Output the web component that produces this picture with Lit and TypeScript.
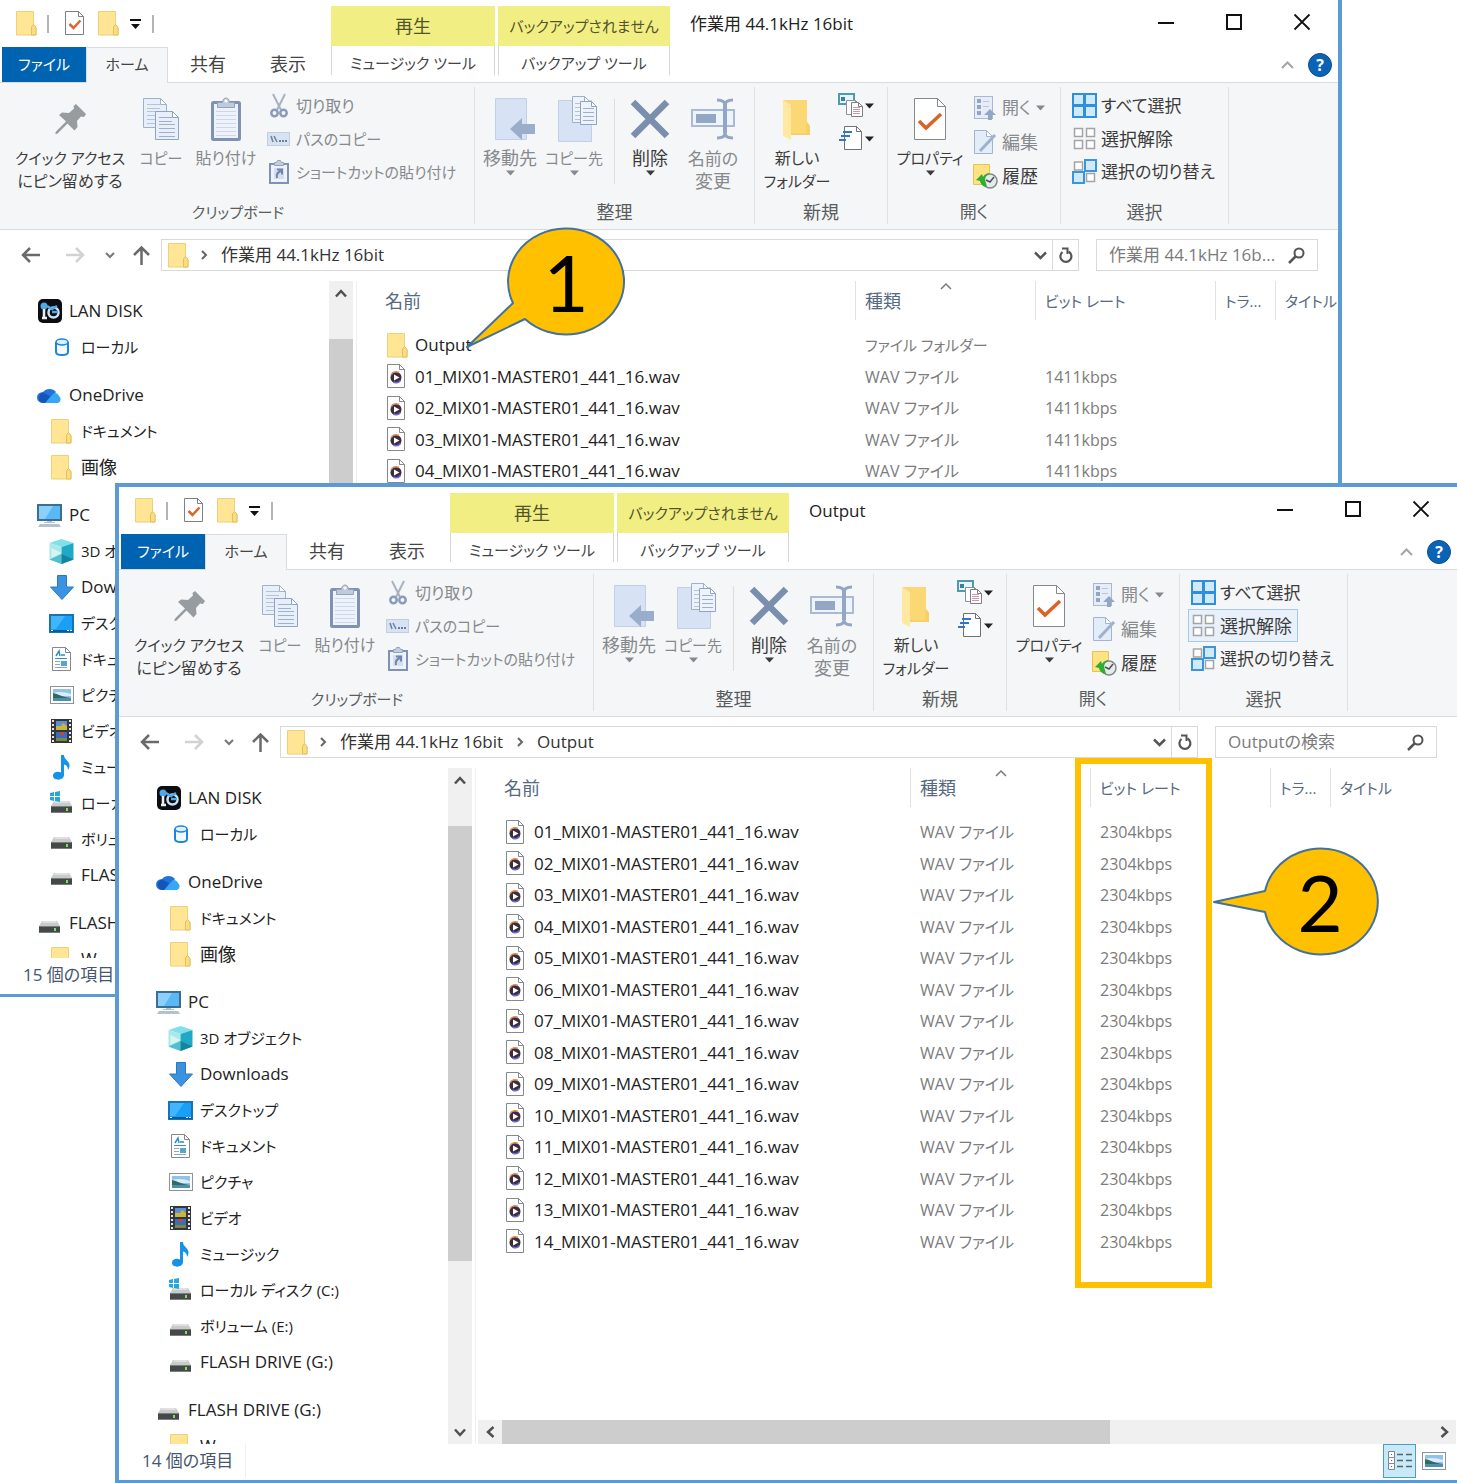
import { LitElement, html, svg, css, nothing, TemplateResult } from "lit";
import { customElement, property } from "lit/decorators.js";

const icon = (w: number, h: number, body: TemplateResult) =>
  html`<svg class="ic" width=${w} height=${h} viewBox="0 0 ${w} ${h}" fill="none" aria-hidden="true">${body}</svg>`;

const lines = (x: number, y: number, w: number, n: number, step: number, color: string) =>
  svg`<path stroke=${color} d=${Array.from({ length: n }, (_, i) => `M${x} ${y + i * step + 0.5}h${w}`).join("")}></path>`;

const page = (x: number, y: number, w: number, h: number, fold: number, fill: string, stroke: string) =>
  svg`<path fill=${fill} stroke=${stroke} d="M${x + 0.5} ${y + 0.5}h${w - fold - 1}l${fold} ${fold}v${h - fold - 1}h${-(w - 1)}z"></path>
      <path fill="#fff" stroke=${stroke} d="M${x + w - fold - 0.5} ${y + 0.5}v${fold}h${fold}z"></path>`;

const driveShape = svg`
  <path fill="#c9cbcb" d="M3 10h15l3 5H0z"></path>
  <path fill="#dfe0e0" d="M4 10h13l1 2H3z"></path>
  <rect y="15" width="21" height="7" rx="1" fill="#454848"></rect>
  <path stroke="#7b7e7e" d="M1 15.5h19M1 21.5h19"></path>
  <rect x="15" y="17" width="2" height="3" fill="#7fe05c"></rect>`;

const pictureShape = svg`
  <rect x=".5" y=".5" width="23" height="17" fill="#fff" stroke="#8d9499"></rect>
  <path fill="#8fc2ee" d="M3 3h18v12H3z"></path>
  <path fill="#dcecf8" d="M3 7c6-2 12-1 18 1v2H3z"></path>
  <path fill="#2d6b63" d="M3 7c5 1 9 4 18 5v1H3z"></path>
  <path fill="#4e8fae" d="M3 12h18v3H3z"></path>`;

const icons: Record<string, TemplateResult> = {
  folder: icon(21, 25, svg`
    <path fill="#ffe594" stroke="#ecd07a" d="M.5.5h17v15.500l2.500 1v7H.5z"></path>
    <path fill="#fadc83" stroke="#e3c05c" d="M15.500 24v-8l2-2.500 2.500 2.500v8z"></path>`),
  check: icon(20, 25, svg`
    ${page(0, 0, 19, 24, 5, "#fff", "#7d8184")}
    <path stroke="#e0622c" stroke-width="2.500" d="m4.500 13 4 4 7-7.500"></path>`),
  caret: icon(13, 12, svg`<path fill="#111" d="M1 1h11v2H1zM2 6h9l-4.500 5z"></path>`),
  down: icon(9, 6, svg`<path fill="currentColor" d="M0 .5h9L4.500 5.500z"></path>`),
  min: icon(16, 16, svg`<path stroke="#111" stroke-width="2" d="M0 9h16"></path>`),
  max: icon(16, 16, svg`<path stroke="#111" stroke-width="2" d="M1 1h14v14H1z"></path>`),
  close: icon(16, 16, svg`<path stroke="#111" stroke-width="1.800" d="m.5.5 15 15m0-15-15 15"></path>`),
  collapse: icon(13, 8, svg`<path stroke="#a5a5a5" stroke-width="2" d="m1 7 5.500-5.500L12 7"></path>`),
  pin: icon(31, 30, svg`<path fill="#979ca1" d="m21 0 10 10-2 3-3-.5-4 4.500.5 6-3 3.500-7-7L2 30l-2-.5L1.500 27 11 17.500 4 11l3-2.500 7 .5 5-4.500L18.500 2z"></path>`),
  copy: icon(37, 42, svg`
    ${page(0, 0, 24, 30, 6, "#e8eff9", "#9fb0ca")}${lines(4, 6, 13, 2, 4, "#b4c3da")}${lines(4, 13, 16, 4, 4, "#b4c3da")}
    ${page(12, 13, 24, 29, 6, "#e8eff9", "#8fa3c2")}${lines(16, 19, 13, 2, 4, "#9db0cd")}${lines(16, 26, 16, 4, 4, "#9db0cd")}`),
  paste: icon(31, 44, svg`
    <rect x="1.500" y="5.500" width="27" height="37" rx="1" fill="#edf2fb" stroke="#7f92b3" stroke-width="3"></rect>
    ${lines(5, 14, 20, 7, 4, "#cbd8ea")}
    <path fill="#bfcada" stroke="#93a3bd" d="M6.500 10.500v-5h5c0-6 7-6 7 0h5v5z"></path>
    <circle cx="15" cy="4" r="1.500" fill="#fff"></circle>`),
  cut: icon(18, 24, svg`
    <path stroke="#a9b2c0" stroke-width="2" d="m3 0 8 16M15 0 7 16"></path>
    <circle cx="4.500" cy="19" r="3.200" stroke="#8b9cba" stroke-width="2.500"></circle>
    <circle cx="13.500" cy="19" r="3.200" stroke="#8b9cba" stroke-width="2.500"></circle>`),
  path: icon(23, 14, svg`
    <rect x=".5" y=".5" width="22" height="13" fill="#d7e2f2" stroke="#c0cee2"></rect>
    <path stroke="#6d80a1" stroke-width="1.500" d="m4 4 2 6m1-6 3 6"></path>
    <path fill="#6d80a1" d="M12 8h2v2h-2zM15 8h2v2h-2zM18 8h2v2h-2z"></path>`),
  shortcut: icon(20, 24, svg`
    <rect x="1" y="4" width="18" height="19" fill="#edf2fb" stroke="#7f92b3" stroke-width="2"></rect>
    <path fill="#c3cedd" stroke="#93a3bd" d="M5.500 5.500v-3h2l1-2h3l1 2h2v3z"></path>
    <rect x="5" y="8" width="10" height="11" fill="#d3dff0"></rect>
    <path stroke="#6f85ab" stroke-width="2" d="M8 18c-1-4 1-6 4-7M8 9.500h5v5"></path>`),
  moveto: icon(51, 44, svg`<g transform="translate(10 0)">
    <path fill="#d7e3f5" stroke="#c1d0e6" d="M.5 1.500h31v41H.5z"></path>
    <path fill="#9aadcb" d="M15 32 27 21v6h13v10H27v6z"></path></g>`),
  copyto: icon(49, 46, svg`<g transform="translate(8 0)">
    <path fill="#d7e3f5" stroke="#c1d0e6" d="M.5 4.500h33v41H.5z"></path>
    ${page(14, 0, 18, 27, 5, "#edf2fb", "#9fb0ca")}${lines(17, 7, 11, 5, 4, "#b4c3da")}
    ${page(22, 5, 17, 24, 5, "#edf2fb", "#8fa3c2")}${lines(25, 12, 11, 4, 4, "#9db0cd")}</g>`),
  remove: icon(40, 40, svg`<path stroke="#7a8eae" stroke-width="6.500" d="m3 3 34 34m0-34L3 37"></path>`),
  rename: icon(44, 42, svg`
    <rect x="1" y="12" width="42" height="16" fill="#eef4fc" stroke="#a9bad2" stroke-width="2"></rect>
    <rect x="5" y="16" width="20" height="9" fill="#93a6c6"></rect>
    <path stroke="#93a6c6" stroke-width="4" d="M34 5v30"></path>
    <path stroke="#93a6c6" stroke-width="3" d="M26 2c4 0 8 1 8 5 0-4 4-5 8-5M26 40c4 0 8-1 8-5 0 4 4 5 8 5"></path>`),
  newfolder: icon(30, 44, svg`
    <path fill="#fbd874" d="M1 3h24v22l3 4v9H1z"></path>
    <path fill="#ffe9a0" d="M1 3 9 8v35L1 39z"></path>
    <path fill="#f6cf68" d="M9 38h19v-9l-3-4-1 4v7H9z"></path>`),
  newitem: icon(25, 25, svg`
    <rect x="1" y="1" width="15" height="10" fill="#e7f5fb" stroke="#4f9aae" stroke-width="2"></rect>
    <rect x="3" y="4" width="4" height="4" fill="#3e7ea0"></rect>
    ${page(8, 7, 13, 15, 3, "#fff", "#8b8f92")}
    ${page(13, 9, 12, 15, 4, "#fff", "#7d8184")}${lines(15, 14, 7, 4, 2, "#c79aa6")}`),
  easy: icon(24, 25, svg`
    ${page(5, 0, 18, 24, 5, "#fff", "#6f7376")}
    <path stroke="#2f78c4" stroke-width="2" d="M4 6h9M2 10h9M0 14h7"></path>`),
  props: icon(33, 43, svg`
    ${page(0, 0, 32, 42, 8, "#fff", "#85898c")}
    <path stroke="#dc6327" stroke-width="3.500" d="m5 23 7 7 15-14"></path>`),
  open: icon(22, 24, svg`
    <rect x=".5" y=".5" width="18" height="22" fill="#e6edf8" stroke="#a9b8d0"></rect>
    <path fill="#92a5c5" d="M3 3h4v4H3zM3 9h4v4H3zM3 15h4v4H3z"></path>
    <path stroke="#b9c7dc" d="M9 5.500h6M9 10.500h6"></path>
    <path fill="#93a6c6" d="m16 13 6 6h-4v5h-4v-5h-4z"></path>`),
  edit: icon(22, 25, svg`
    ${page(0, 0, 19, 24, 6, "#e3ecf9", "#a3b4d0")}
    <path stroke="#9fb1cd" stroke-width="3" d="M6 21 21 5"></path>`),
  history: icon(25, 25, svg`
    <path fill="#ffe281" stroke="#e6c355" d="M.5.5h16v20H.5z"></path>
    <circle cx="17" cy="17" r="7" fill="#e6eaec" stroke="#83898d" stroke-width="1.500"></circle>
    <path stroke="#4c5255" stroke-width="1.500" d="m13 16 4 2 4-5"></path>
    <path fill="#2fae35" d="m3 16 6-6 1 3c2-3 4-4 7-4-4 2-6 5-4 10l1 4c-3 0-6-2-7-6z"></path>`),
  all: icon(25, 25, svg`
    <path fill="#cfeafd" stroke="#2f8fdc" stroke-width="2" d="M1 1h11v11H1zM13 1h11v11H13zM1 13h11v11H1zM13 13h11v11H13z"></path>
    <path stroke="#2f8fdc" stroke-width="2" d="M12.500 0v25M0 12.500h25"></path>`),
  none: icon(25, 25, svg`
    <path fill="#fff" stroke="#a2a5a8" stroke-width="1.500" d="M2.500 2.500h8v8h-8zM14.500 2.500h8v8h-8zM2.500 14.500h8v8h-8zM14.500 14.500h8v8h-8z"></path>`),
  invert: icon(25, 25, svg`
    <path fill="#fff" stroke="#a2a5a8" stroke-width="1.500" d="M2.500 3h8v8h-8zM14.500 14.500h8v8h-8z"></path>
    <path fill="#cfeafd" stroke="#3c94da" stroke-width="2" d="M13 1h11v11H13zM1 13h11v11H1z"></path>`),
  back: icon(19, 16, svg`<path stroke="#6a6a6a" stroke-width="2.500" d="M19 8H2m7-7L2 8l7 7"></path>`),
  forward: icon(19, 16, svg`<path stroke="#d2d2d2" stroke-width="2.500" d="M0 8h17m-7-7 7 7-7 7"></path>`),
  recent: icon(10, 7, svg`<path stroke="#777" stroke-width="2" d="m1 1 4 4 4-4"></path>`),
  up: icon(17, 19, svg`<path stroke="#6a6a6a" stroke-width="2.500" d="M8.500 19V2M1 9l7.500-7.500L16 9"></path>`),
  crumb: icon(7, 10, svg`<path stroke="#666" stroke-width="2" d="m1 1 4 4-4 4"></path>`),
  expand: icon(13, 9, svg`<path stroke="#555" stroke-width="2.500" d="m1 1.500 5.500 5.500L12 1.500"></path>`),
  refresh: icon(14, 17, svg`
    <path stroke="#555" stroke-width="2.200" d="M9.500 4.500A5.500 5.500 0 1 1 3.500 5"></path>
    <path stroke="#555" stroke-width="2" d="M3 1.500h5.500V7"></path>`),
  search: icon(17, 17, svg`
    <circle cx="11" cy="6" r="4.500" stroke="#555" stroke-width="2"></circle>
    <path stroke="#555" stroke-width="2.500" d="m1 16 7-7"></path>`),
  arrowUp: icon(12, 9, svg`<path stroke="#505050" stroke-width="2.500" d="m1 7.500 5-5.500 5 5.500"></path>`),
  arrowDown: icon(12, 9, svg`<path stroke="#505050" stroke-width="2.500" d="m1 1.500 5 5.500 5-5.500"></path>`),
  arrowLeft: icon(9, 12, svg`<path stroke="#505050" stroke-width="2.500" d="M7.500 1 2 6l5.500 5"></path>`),
  arrowRight: icon(9, 12, svg`<path stroke="#505050" stroke-width="2.500" d="M1.500 1 7 6l-5.500 5"></path>`),
  sort: icon(12, 7, svg`<path stroke="#7a7a7a" stroke-width="1.500" d="m1 6 5-5 5 5"></path>`),
  lan: icon(24, 24, svg`
    <rect width="24" height="24" rx="5" fill="#0b0d10"></rect>
    <circle cx="6" cy="7" r="3.500" fill="#4fa8e8"></circle>
    <path stroke="#e8f1f8" stroke-width="2.500" d="M6 10v9M4 19h5"></path>
    <circle cx="15.500" cy="13.500" r="5" stroke="#cfe2f2" stroke-width="2.500"></circle>
    <path stroke="#4fa8e8" stroke-width="2.500" d="m9 7 5 3 5-3M14 13h6"></path>`),
  local: icon(14, 18, svg`
    <path fill="#f2faff" stroke="#1d86dc" stroke-width="2" d="M1 4v10c0 4 12 4 12 0V4"></path>
    <ellipse cx="7" cy="4" rx="6" ry="3" fill="#d9effd" stroke="#1d86dc" stroke-width="1.500"></ellipse>`),
  cloud: icon(25, 17, svg`
    <path fill="#1f74dc" d="M6 16a6 5.500 0 0 1 0-11 8 7 0 0 1 13 0l-9 11z"></path>
    <path fill="#1655b8" d="M6 5.500A6 5.500 0 0 0 6 16h3l4-7z"></path>
    <path fill="#36a7f3" d="M8 16 17 6a5 5 0 0 1 5 3 4 4 0 0 1-1 7z"></path>`),
  pc: icon(25, 23, svg`
    <rect x="1" y="1" width="23" height="15" fill="#5ab8f5" stroke="#3a6f93" stroke-width="2"></rect>
    <path fill="#8bd0fa" d="M2 2h14L8 15H2z"></path>
    <path fill="#b4c2cc" d="M10 17h5v1h3v1H7v-1h3zM3 20h19l2 3H1z"></path>`),
  cube: icon(25, 25, svg`
    <path fill="#7fe0e8" d="m12.500 0 12 4-12 4-12-4z"></path>
    <path fill="#a9e9ea" d="m.5 4 12 4v17l-12-4.500z"></path>
    <path fill="#1fa9c4" d="m24.500 4-12 4v17l12-4.500z"></path>
    <path fill="#d6f6f1" d="m2.500 9 10 5-10 5z"></path>
    <path fill="#4fc0cc" d="m.5 20.500 12-5.500v10z"></path><path fill="#14849f" d="m12.500 15 12 5.500-12 4.500z"></path>`),
  download: icon(24, 25, svg`<path fill="#3b93e0" stroke="#2a78c2" d="M7.500.5h9V12h7L12 24.500.5 12h7z"></path>`),
  desktop: icon(25, 19, svg`
    <rect x="1" y="1" width="23" height="17" fill="#18a0f7" stroke="#1b72b4" stroke-width="2"></rect>
    <path fill="#43b5fb" d="M2 2h14L7 15H2z"></path><path fill="#0d5a9a" d="M1 16h23v2H1z"></path>
    <path fill="#fff" d="M2 16h2v1H2zM18 16h2v1h-2zM21 16h2v1h-2z"></path>`),
  doc: icon(19, 25, svg`
    ${page(0, 0, 19, 24, 5, "#fff", "#83898d")}
    <path stroke="#2d8fc9" stroke-width="1.500" d="m4 9 3-5 1 5m1-1h4"></path>
    ${lines(3, 11, 12, 1, 3, "#2d8fc9")}${lines(3, 14, 5, 3, 3, "#8fa9ba")}
    <path fill="#5aa4c8" d="M9 14h6v5H9z"></path>${lines(3, 20, 12, 1, 3, "#8fa9ba")}`),
  picture: icon(24, 18, pictureShape),
  video: icon(21, 24, svg`
    <path fill="#33363a" d="M0 0h21v24H0z"></path>
    <path stroke="#e8e8e8" stroke-width="2" stroke-dasharray="2 2" d="M2 1v22M19 1v22"></path>
    <path fill="#5f8ed6" d="M5 2h11v9H5z"></path><path fill="#c8b73a" d="M5 7h5l2-3 4 3v4H5z"></path>
    <path fill="#3c6cc0" d="M5 13h11v9H5z"></path><path fill="#b5503f" d="M9 13h4v3H9z"></path><path fill="#7a8a3c" d="M5 19h11v3H5z"></path>`),
  music: icon(17, 25, svg`
    <path fill="#1593e6" d="M8 0h3c0 5 6 6 5.500 11-.2 2-1 3-1.500 4 0-4-2-5-4-5.500V20c0 6-11 6-11 1 0-4 5-5 8-3.500z"></path>`),
  driveC: icon(21, 24, svg`${driveShape}<path fill="#25a7dd" d="M-1 2l4-1v4h-4zM4 1l5-1v5H4zM-1 6h4v4l-4-1zM4 6h5v5l-5-1z"></path>`),
  drive: icon(21, 24, driveShape),
  wav: icon(19, 25, svg`
    ${page(0, 0, 18, 24, 5, "#fff", "#85898c")}
    <circle cx="9" cy="13.500" r="5.500" fill="#3b2d3f"></circle>
    <path stroke="#e5894a" stroke-width="1.500" d="M4 11a5.500 5.500 0 0 1 8-2.500"></path>
    <path stroke="#6f6ad0" stroke-width="1.500" d="M13.500 16.500a5.500 5.500 0 0 1-7 1.500"></path>
    <path fill="#fff" d="m7 10.500 5.500 3-5.500 3z"></path>`),
  details: icon(26, 20, svg`
    <path fill="#fff" stroke="#7d8b93" d="M1.500.5h6v6h-6zM1.500 6.500h6v6h-6zM1.500 12.500h6v6h-6z"></path>
    <path fill="#56646c" d="M4 3h1v1H4zM4 9h1v1H4zM4 15h1v1H4z"></path>
    <path stroke="#56646c" stroke-width="1.500" d="M10 3.500h6M19 3.500h6M10 9.500h6M19 9.500h6M10 15.500h6M19 15.500h6"></path>`),
};

interface FileRow { name: string; type: string; rate: string; folder?: boolean; }
interface NavItem { icon: string; label: string; }
interface NavGroup { root: NavItem; children: NavItem[]; }

/* Katakana labels are set smallest, Latin ones larger and pure kanji ones largest. */
const sizeOf = (text: string) =>
  /[\u30a0-\u30ff]/.test(text) ? "s15" : /^[\u4e00-\u9fff]+$/.test(text) ? "s18" : "s17";

const wavRows = (count: number, rate: string): FileRow[] =>
  Array.from({ length: count }, (_, i) => ({
    name: `${String(i + 1).padStart(2, "0")}_MIX01-MASTER01_441_16.wav`,
    type: "WAV ファイル",
    rate,
  }));

const navGroups: NavGroup[] = [
  { root: { icon: "lan", label: "LAN DISK" }, children: [{ icon: "local", label: "ローカル" }] },
  {
    root: { icon: "cloud", label: "OneDrive" },
    children: [{ icon: "folder", label: "ドキュメント" }, { icon: "folder", label: "画像" }],
  },
  {
    root: { icon: "pc", label: "PC" },
    children: [
      { icon: "cube", label: "3D オブジェクト" },
      { icon: "download", label: "Downloads" },
      { icon: "desktop", label: "デスクトップ" },
      { icon: "doc", label: "ドキュメント" },
      { icon: "picture", label: "ピクチャ" },
      { icon: "video", label: "ビデオ" },
      { icon: "music", label: "ミュージック" },
      { icon: "driveC", label: "ローカル ディスク (C:)" },
      { icon: "drive", label: "ボリューム (E:)" },
      { icon: "drive", label: "FLASH DRIVE (G:)" },
    ],
  },
  { root: { icon: "drive", label: "FLASH DRIVE (G:)" }, children: [{ icon: "folder", label: "W" }] },
];

@customElement("explorer-window")
export class ExplorerWindow extends LitElement {
  @property() heading = "";
  @property({ attribute: false }) crumbs: string[] = [];
  @property() searchHint = "";
  @property() status = "";
  @property({ attribute: false }) rows: FileRow[] = [];
  @property({ type: Boolean }) compact = false;
  @property({ type: Boolean }) hoverNone = false;

  static styles = css`
    :host {
      display: flex;
      flex-direction: column;
      box-sizing: border-box;
      min-width: 0;
      min-height: 0;
      overflow: hidden;
      background: #fff;
      color: #222;
      font: 16px/22px "Open Sans", "Noto Sans CJK JP", sans-serif;
      font-feature-settings: "palt";
    }
    * { box-sizing: border-box; }
    button, a, input {
      font: inherit;
      font-feature-settings: inherit;
      color: inherit;
      background: none;
      border: 0;
      padding: 0;
      margin: 0;
      text-decoration: none;
      white-space: nowrap;
    }
    .ic { display: block; flex: none; overflow: visible; }
    .s15 { font-size: 15px; }
    .s16 { font-size: 16px; }
    .s17 { font-size: 17px; }
    .s18 { font-size: 18px; }

    .head { display: flex; height: 82px; flex: none; padding-left: 2px; }
    .left { width: 329px; flex: none; }
    .quick { display: flex; align-items: center; height: 47px; padding-left: 14px; }
    .quick .sep { width: 2px; height: 18px; background: #b4b4b4; margin: 0 16px 0 10px; }
    .quick .gap { margin: 0 10px 0 13px; }
    .quick .end { margin: 0 0 0 10px; }
    .tabs { display: flex; height: 35px; }
    .tab { width: 80px; height: 35px; padding-bottom: 2px; color: #444; }
    .tab.file { width: 84px; background: #0063b1; color: #fff; }
    .tab.home {
      width: 82px;
      height: 36px;
      padding-bottom: 4px;
      background: #f5f6f7;
      border: 1px solid #dadbdc;
      border-bottom: 0;
      position: relative;
      z-index: 1;
    }
    .context { flex: none; width: 164px; margin-right: 3px; padding-top: 6px; }
    .context.wide { width: 172px; }
    .context .cap {
      height: 40px;
      background: #f1ef83;
      color: #55532b;
      text-align: center;
      line-height: 40px;
      white-space: nowrap;
    }
    .context button {
      width: 100%;
      height: 29px;
      padding-top: 5px;
      line-height: 24px;
      border: solid #d6d6d6;
      border-width: 0 1px;
      color: #444;
    }
    .right { flex: 1; min-width: 0; }
    .title { display: flex; justify-content: space-between; height: 47px; padding-left: 17px; }
    .title h1 { margin: 0; font-size: 17px; font-weight: 400; line-height: 47px; white-space: nowrap; }
    .controls { display: flex; padding-right: 2px; }
    .controls button { width: 68px; height: 44px; }
    .controls button, .nav button, .bar button, .views button, .drop, .tools button { display: flex; align-items: center; justify-content: center; }
    .tools { display: flex; justify-content: flex-end; align-items: center; gap: 14px; height: 35px; padding-right: 6px; }
    .tools .help {
      width: 24px; height: 24px; border-radius: 50%;
      background: #0a63b5; color: #fff; font-weight: 700; border: 1px solid #0a4f91;
    }

    .ribbon {
      display: flex;
      flex: none;
      height: 148px;
      padding: 4px 0 5px 2px;
      background: #f5f6f7;
      border: solid #dadbdc;
      border-width: 1px 0;
    }
    .group { display: flex; flex-direction: column; flex: none; border-right: 1px solid #dfe0e2; }
    .group .body { display: flex; flex: 1; }
    .group .name { height: 24px; line-height: 24px; text-align: center; color: #5a5d60; }
    .w1 { width: 473px; } .w2 { width: 280px; } .w3 { width: 133px; } .w4 { width: 173px; } .w5 { width: 168px; }
    .w2 .body, .w3 .body, .w4 .body { padding-left: 3px; }
    .w5 .body { padding-left: 8px; }
    .big {
      display: flex; flex-direction: column; align-items: center; flex: none;
      width: 64px; padding-top: 10px; line-height: 23px; color: #3c3c3c; align-self: flex-start;
    }
    .big .pic { display: flex; align-items: center; height: 44px; margin-bottom: 6px; }
    .big .t { text-align: center; }
    .big .row { display: block; height: 23px; }
    .b136 { width: 136px; } .b46 { width: 46px; } .b84 { width: 84px; } .b70 { width: 70px; } .b78 { width: 78px; } .b56 { width: 56px; }
    .off { color: #86898d; }
    .rule { width: 1px; margin: 12px 0 16px 8px; background: #dcdddf; }
    .stack { padding-top: 2px; }
    .small { display: flex; align-items: center; gap: 7px; height: 33px; color: #3c3c3c; }
    .small.off { color: #86898d; }
    .small .pic { display: flex; justify-content: center; width: 21px; }
    .w4 .stack { padding-top: 4px; padding-left: 4px; }
    .w4 .small { gap: 5px; height: 34px; }
    .w4 .small .pic { width: 24px; }
    .w5 .small { gap: 4px; padding: 0 5px 0 2px; border: 1px solid transparent; }
    .w5 .small.hover { background: #e8f0fa; border-color: #a9c7ec; }
    .w5 .small .pic { width: 25px; }
    .w3 .small { padding-left: 2px; gap: 2px; color: #222; }
    .w3 .small .pic { width: 25px; }

    .nav { display: flex; flex: none; height: 51px; padding: 9px 20px 10px 8px; }
    .nav .n44 { width: 44px; } .nav .n46 { width: 46px; } .nav .n24 { width: 24px; } .nav .n38 { width: 38px; }
    .bar { display: flex; align-items: center; flex: 1; min-width: 0; border: 1px solid #d9d9d9; padding-left: 6px; margin-left: 1px; height: 32px; }
    .bar .crumbs { display: flex; align-items: center; flex: 1; min-width: 0; color: #333; font-size: 17px; }
    .bar .crumbs .ic { margin: 0 13px 0 12px; }
    .bar .crumbs button { margin-right: 2px; }
    .bar .w26 { width: 24px; height: 30px; }
    .bar .line { border-left: 1px solid #d9d9d9; width: 26px; }
    .search { display: flex; align-items: center; flex: none; width: 222px; height: 32px; margin-left: 17px; padding: 0 12px; border: 1px solid #d9d9d9; font-size: 17px; }
    .search input { flex: 1; min-width: 0; outline: 0; }
    .search input::placeholder { color: #7b7b7b; opacity: 1; }

    .main { display: flex; flex: 1; min-height: 0; }
    .side { display: flex; flex: none; width: 357px; border-right: 1px solid #efefef; padding-right: 3px; }
    .tree { flex: 1; min-width: 0; overflow: hidden; padding: 0; margin: 0; }
    .branch { margin: 12px 0 0; padding: 0; list-style: none; }
    .branch a { display: flex; align-items: center; height: 36px; padding-left: 37px; gap: 7px; color: #222; }
    .branch a.child { padding-left: 49px; }
    .branch .pic { display: flex; justify-content: center; width: 25px; }
    .vscroll { display: flex; flex-direction: column; flex: none; width: 24px; background: #f0f0f0; }
    .hscroll { display: flex; flex: none; height: 24px; margin: 0 1px 0 2px; background: #f0f0f0; }
    .drop { flex: none; width: 24px; height: 24px; }
    .track { display: flex; flex: 1; flex-direction: inherit; }
    .thumb { background: #cdcdcd; }
    .f34 { flex: 34; } .f435 { flex: 435; } .f159 { flex: 159; } .f607 { flex: 607; } .f322 { flex: 322; }
    .files { display: flex; flex-direction: column; flex: 1; min-width: 0; }
    .list { flex: 1; min-height: 0; overflow: hidden; }
    table { width: 100%; table-layout: fixed; border-collapse: collapse; }
    .c-name { width: 498px; }
    .c-name.short { width: 434px; }
    .c-mid { width: 180px; } .c-track { width: 60px; }
    th { padding: 0 0 9px; font-weight: 400; text-align: left; color: #56697f; }
    th .cell { display: flex; align-items: center; height: 39px; padding-left: 9px; border-left: 1px solid #e2e2e2; white-space: nowrap; position: relative; }
    th:first-child .cell { padding-left: 27px; border-color: transparent; }
    th .sort { position: absolute; left: 0; right: 0; top: 2px; display: flex; justify-content: center; }
    td { height: 31px; padding: 0 0 0 10px; color: #7c7c7c; white-space: nowrap; line-height: 22px; }
    tr:nth-child(odd) td { height: 32px; }
    td:first-child { padding-left: 30px; color: #222; font-size: 17px; }
    .fname { display: flex; align-items: center; gap: 9px; }
    .fname .pic { display: flex; width: 19px; }

    .foot { display: flex; justify-content: space-between; flex: none; height: 36px; padding: 0 11px 0 23px; color: #46566e; }
    .foot .count { line-height: 34px; padding-right: 12px; border-right: 1px solid #f0f0f0; height: 34px; font-size: 17px; }
    .views { display: flex; gap: 6px; }
    .views button { width: 24px; height: 34px; }
    .views .on { width: 33px; background: #c9e8f8; border: 1px solid #4aa0c4; }
  `;

  private big(ic: string, rows: [string, string][], cls: string, arrow = false) {
    return html`<button class="big ${cls}">
      <span class="pic">${icons[ic]}</span>
      <span class="t">${rows.map(([text, size]) => html`<span class="row ${size}">${text}</span>`)}</span>
      ${arrow ? icons.down : nothing}
    </button>`;
  }

  private small(ic: string, text: string, cls = "", arrow = false) {
    return html`<button class="small ${cls}"><span class="pic">${icons[ic]}</span><span>${text}</span>${arrow ? icons.down : nothing}</button>`;
  }

  private iconOnly(ic: string, label: string) {
    return html`<button class="small" aria-label=${label}><span class="pic">${icons[ic]}</span>${icons.down}</button>`;
  }

  private link(item: NavItem, child: boolean) {
    return html`<li><a href="#" class="${child ? "child" : "root"} ${sizeOf(item.label)}"><span class="pic">${icons[item.icon]}</span>${item.label}</a></li>`;
  }

  render() {
    return html`
      <header class="head">
        <div class="left">
          <div class="quick">
            ${icons.folder}<span class="sep"></span>${icons.check}
            <span class="gap">${icons.folder}</span>${icons.caret}<span class="sep end"></span>
          </div>
          <div class="tabs">
            <button class="tab s15 file">ファイル</button>
            <button class="tab s15 home">ホーム</button>
            <button class="tab s18">共有</button>
            <button class="tab s18">表示</button>
          </div>
        </div>
        <div class="context"><div class="cap s18">再生</div><button class="s15">ミュージック ツール</button></div>
        <div class="context wide"><div class="cap s15">バックアップされません</div><button class="s15">バックアップ ツール</button></div>
        <div class="right">
          <div class="title">
            <h1>${this.heading}</h1>
            <div class="controls">
              <button aria-label="最小化">${icons.min}</button>
              <button aria-label="最大化">${icons.max}</button>
              <button aria-label="閉じる">${icons.close}</button>
            </div>
          </div>
          <div class="tools">
            <button aria-label="リボンの最小化">${icons.collapse}</button>
            <button class="help">?</button>
          </div>
        </div>
      </header>

      <section class="ribbon">
        <div class="group w1">
          <div class="body">
            ${this.big("pin", [["クイック アクセス", "s15"], ["にピン留めする", "s16"]], "b136")}
            ${this.big("copy", [["コピー", "s15"]], "b46 off")}
            ${this.big("paste", [["貼り付け", "s16"]], "b84 off")}
            <div class="stack">
              ${this.small("cut", "切り取り", "s16 off")}
              ${this.small("path", "パスのコピー", "s15 off")}
              ${this.small("shortcut", "ショートカットの貼り付け", "s15 off")}
            </div>
          </div>
          <div class="name s15">クリップボード</div>
        </div>
        <div class="group w2">
          <div class="body">
            ${this.big("moveto", [["移動先", "s18"]], "off", true)}
            ${this.big("copyto", [["コピー先", "s15"]], "off", true)}
            <span class="rule"></span>
            ${this.big("remove", [["削除", "s18"]], "b70", true)}
            ${this.big("rename", [["名前の", "s17"], ["変更", "s18"]], "b56 off")}
          </div>
          <div class="name s18">整理</div>
        </div>
        <div class="group w3">
          <div class="body">
            ${this.big("newfolder", [["新しい", "s16"], ["フォルダー", "s15"]], "b78")}
            <div class="stack">
              ${this.iconOnly("newitem", "新しいアイテム")}
              ${this.iconOnly("easy", "ショートカット")}
            </div>
          </div>
          <div class="name s18">新規</div>
        </div>
        <div class="group w4">
          <div class="body">
            ${this.big("props", [["プロパティ", "s15"]], "b78", true)}
            <div class="stack">
              ${this.small("open", "開く", "s17 off", true)}
              ${this.small("edit", "編集", "s18 off")}
              ${this.small("history", "履歴", "s18")}
            </div>
          </div>
          <div class="name s17">開く</div>
        </div>
        <div class="group w5">
          <div class="body">
            <div class="stack">
              ${this.small("all", "すべて選択", "s17")}
              ${this.small("none", "選択解除", this.hoverNone ? "s18 hover" : "s18")}
              ${this.small("invert", "選択の切り替え", "s17")}
            </div>
          </div>
          <div class="name s18">選択</div>
        </div>
      </section>

      <nav class="nav">
        <button class="n44" aria-label="戻る">${icons.back}</button>
        <button class="n46" aria-label="進む">${icons.forward}</button>
        <button class="n24" aria-label="最近表示した場所">${icons.recent}</button>
        <button class="n38" aria-label="上へ">${icons.up}</button>
        <div class="bar">
          ${icons.folder}
          <div class="crumbs">${this.crumbs.map((c) => html`${icons.crumb}<button>${c}</button>`)}</div>
          <button class="w26" aria-label="以前の場所">${icons.expand}</button>
          <button class="w26 line" aria-label="更新">${icons.refresh}</button>
        </div>
        <label class="search">
          <input type="text" aria-label="検索" placeholder=${this.searchHint} />
          ${icons.search}
        </label>
      </nav>

      <div class="main">
        <aside class="side">
          <div class="tree">
            ${navGroups.map((g) => html`<ul class="branch">${this.link(g.root, false)}${g.children.map((c) => this.link(c, true))}</ul>`)}
          </div>
          <div class="vscroll">
            <button class="drop" aria-label="上へスクロール">${icons.arrowUp}</button>
            <div class="track"><span class="f34"></span><span class="thumb f435"></span><span class="f159"></span></div>
            <button class="drop" aria-label="下へスクロール">${icons.arrowDown}</button>
          </div>
        </aside>
        <section class="files">
          <div class="list">
            <table>
              <colgroup>
                <col class=${this.compact ? "c-name short" : "c-name"} />
                <col class="c-mid" /><col class="c-mid" /><col class="c-track" /><col />
              </colgroup>
              <thead>
                <tr>
                  <th><div class="cell s18">名前</div></th>
                  <th><div class="cell s18">種類<span class="sort">${icons.sort}</span></div></th>
                  <th><div class="cell s15">ビット レート</div></th>
                  <th><div class="cell s15">トラ...</div></th>
                  <th><div class="cell s15">タイトル</div></th>
                </tr>
              </thead>
              <tbody>
                ${this.rows.map((r) => html`<tr>
                  <td><span class="fname"><span class="pic">${r.folder ? icons.folder : icons.wav}</span>${r.name}</span></td>
                  <td class=${r.folder ? "s15" : "s16"}>${r.type}</td><td>${r.rate}</td><td></td><td></td>
                </tr>`)}
              </tbody>
            </table>
          </div>
          <div class="hscroll">
            <button class="drop" aria-label="左へスクロール">${icons.arrowLeft}</button>
            <div class="track"><span class="thumb f607"></span><span class="f322"></span></div>
            <button class="drop" aria-label="右へスクロール">${icons.arrowRight}</button>
          </div>
        </section>
      </div>

      <footer class="foot">
        <span class="count">${this.status}</span>
        <div class="views">
          <button class="on" aria-label="詳細">${icons.details}</button>
          <button aria-label="大アイコン">${icons.picture}</button>
        </div>
      </footer>
    `;
  }
}

@customElement("app-root")
export class AppRoot extends LitElement {
  static styles = css`
    :host { display: block; background: #fff; }
    .desk {
      display: grid;
      grid-template: minmax(0, 1fr) / minmax(0, 1fr);
      height: 100vh;
      min-height: 1300px;
      min-width: 1200px;
      overflow: hidden;
    }
    .first, .second { grid-area: 1 / 1; position: relative; display: grid; grid-template: minmax(0, 1fr) / minmax(0, 1fr); }
    .first { margin: 0 115px 486px 0; border: solid #5b9bd5; border-width: 0 4px 3px 0; }
    .second { margin: 483px 0 0 115px; border: solid #5b9bd5; border-width: 4px 0 3px 4px; background: #fff; }
    .callout { position: absolute; display: block; overflow: visible; }
    .one { left: 464px; top: 228px; }
    .two { left: 1093px; top: 360px; }
    .shape { fill: #ffc000; stroke: #41719c; stroke-width: 2; stroke-linejoin: round; }
    .digit { font: 78px Lato, sans-serif; text-anchor: middle; fill: #000; }
    .mark { position: absolute; left: 956px; top: 271px; width: 137px; height: 530px; border: 6px solid #ffc000; box-sizing: border-box; }
  `;

  private outer: FileRow[] = [
    { name: "Output", type: "ファイル フォルダー", rate: "", folder: true },
    ...wavRows(14, "1411kbps"),
  ];
  private inner: FileRow[] = wavRows(14, "2304kbps");

  render() {
    return html`
      <main class="desk">
        <div class="first">
          <explorer-window
            heading="作業用 44.1kHz 16bit"
            .crumbs=${["作業用 44.1kHz 16bit"]}
            .searchHint=${"作業用 44.1kHz 16b..."}
            status="15 個の項目"
            .rows=${this.outer}
          ></explorer-window>
          <svg class="callout one" width="162" height="122" viewBox="0 0 162 122">
            <path class="shape" d="M49 75A58 53 0 1 1 61 91L3 119z"></path>
            <text class="digit" x="102" y="84">1</text>
          </svg>
        </div>
        <div class="second">
          <explorer-window
            heading="Output"
            .crumbs=${["作業用 44.1kHz 16bit", "Output"]}
            .searchHint=${"Outputの検索"}
            status="14 個の項目"
            .rows=${this.inner}
            compact
            .hoverNone=${true}
          ></explorer-window>
          <div class="mark"></div>
          <svg class="callout two" width="170" height="110" viewBox="0 0 170 110">
            <path class="shape" d="M53 44A57 53 0 1 1 53 65L2 55z"></path>
            <text class="digit" x="108" y="85">2</text>
          </svg>
        </div>
      </main>
    `;
  }
}
